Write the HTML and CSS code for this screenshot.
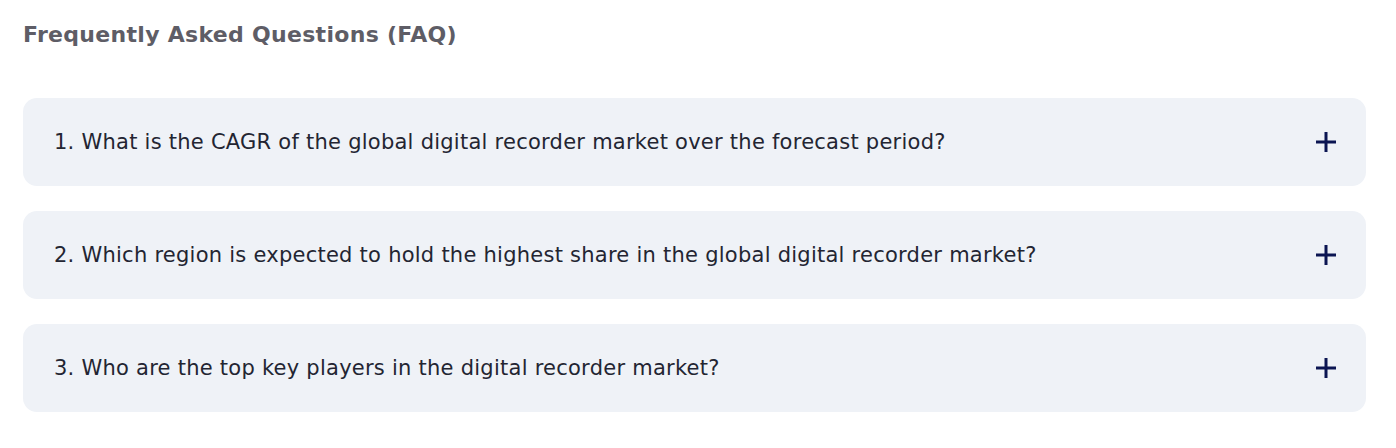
FILE: index.html
```html
<!DOCTYPE html>
<html>
<head>
<meta charset="utf-8">
<link rel="stylesheet" href="styles.css">
</head>
<body>
<section class="faq">
  <h2 class="faq-title">Frequently Asked Questions (FAQ)</h2>
  <div class="faq-list">
    <div class="faq-item">
      <span class="faq-q">1. What is the CAGR of the global digital recorder market over the forecast period?</span>
      <svg class="faq-icon" width="22" height="22" viewBox="0 0 22 22"><path d="M11 1v20M1 11h20" stroke="#0b1552" stroke-width="3" fill="none"/></svg>
    </div>
    <div class="faq-item">
      <span class="faq-q">2. Which region is expected to hold the highest share in the global digital recorder market?</span>
      <svg class="faq-icon" width="22" height="22" viewBox="0 0 22 22"><path d="M11 1v20M1 11h20" stroke="#0b1552" stroke-width="3" fill="none"/></svg>
    </div>
    <div class="faq-item">
      <span class="faq-q">3. Who are the top key players in the digital recorder market?</span>
      <svg class="faq-icon" width="22" height="22" viewBox="0 0 22 22"><path d="M11 1v20M1 11h20" stroke="#0b1552" stroke-width="3" fill="none"/></svg>
    </div>
  </div>
</section>
</body>
</html>
```
FILE: styles.css
```css
html, body { margin: 0; padding: 0; background: #fff; }
.faq { padding: 20px 30px 0 23px; }
.faq-title {
  margin: 0;
  font-family: "DejaVu Sans", sans-serif;
  font-weight: 700;
  font-size: 22px;
  letter-spacing: 0.3px;
  line-height: 30px;
  color: #5e5d66;
}
.faq-list { display: flex; flex-direction: column; gap: 25px; margin-top: 48px; }
.faq-item {
  display: flex;
  align-items: center;
  justify-content: space-between;
  height: 88px;
  box-sizing: border-box;
  padding: 0 29px 0 31px;
  background: #eff2f7;
  border-radius: 14px;
}
.faq-q {
  font-family: "DejaVu Sans", sans-serif;
  font-size: 21px;
  letter-spacing: 0.25px;
  color: #232532;
}
.faq-icon { display: block; }
```
